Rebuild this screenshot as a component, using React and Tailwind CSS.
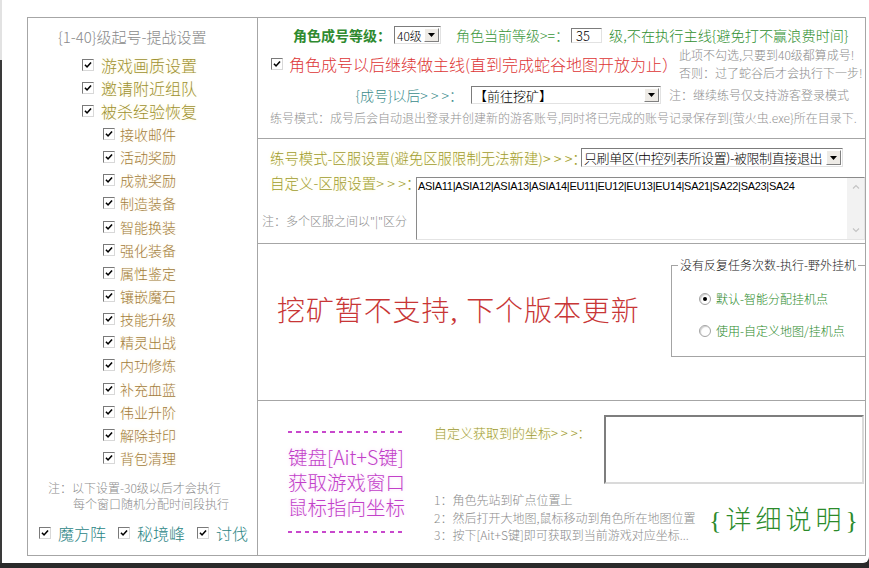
import clsx from "clsx";

const sans = "font-['Noto_Sans_CJK_SC',sans-serif]";
const serif = "font-['Liberation_Serif','Noto_Sans_CJK_SC',serif]";

const level1 = ["游戏画质设置", "邀请附近组队", "被杀经验恢复"];
const level2 = [
	"接收邮件",
	"活动奖励",
	"成就奖励",
	"制造装备",
	"智能换装",
	"强化装备",
	"属性鉴定",
	"镶嵌魔石",
	"技能升级",
	"精灵出战",
	"内功修炼",
	"补充血蓝",
	"伟业升阶",
	"解除封印",
	"背包清理",
];

const Check = ({ className }) => (
	<span
		className={clsx(
			"inline-flex h-[12px] w-[12px] shrink-0 items-center justify-center border border-t-[#7a7a7a] border-l-[#7a7a7a] border-r-[#d8d8d8] border-b-[#d8d8d8] bg-white",
			className
		)}
	>
		<svg viewBox="0 0 10 10" className="h-[8px] w-[8px]">
			<path d="M1.2 4.6 L3.8 7.4 L8.8 1.8" fill="none" stroke="#000" strokeWidth="2" />
		</svg>
	</span>
);

const Radio = ({ on }) => (
	<span className="flex h-[12px] w-[12px] shrink-0 items-center justify-center rounded-full border border-[#a4a4a4] bg-white shadow-[inset_1px_1px_1px_#cfcfcf]">
		{on && <span className="h-[4px] w-[4px] rounded-full bg-black" />}
	</span>
);

const Select = ({ value, className, textClass }) => (
	<div
		className={clsx(
			"flex items-stretch border border-t-[#7c7c7c] border-l-[#7c7c7c] border-b-[#e2e2e2] border-r-[#e2e2e2] bg-white",
			className
		)}
	>
		<span className={clsx("flex flex-1 items-center overflow-hidden whitespace-nowrap leading-[15px]", textClass)}>
			{value}
		</span>
		<span className="m-px flex w-[15px] shrink-0 items-center justify-center border border-t-white border-l-white border-b-[#808080] border-r-[#808080] bg-[#eeebe6]">
			<svg viewBox="0 0 7 4" className="h-[4px] w-[7px]">
				<path d="M0 0 H7 L3.5 4 Z" fill="#000" />
			</svg>
		</span>
	</div>
);

const Chevron = ({ up }) => (
	<svg viewBox="0 0 8 5" className="h-[5px] w-[8px]">
		<path
			d={up ? "M1 4.5 L4 1.5 L7 4.5" : "M1 0.5 L4 3.5 L7 0.5"}
			fill="none"
			stroke="#c4c4c4"
			strokeWidth="1.2"
		/>
	</svg>
);

const LeftPanel = () => (
	<div className="flex h-[539px] w-[231px] shrink-0 flex-col border border-[#a6a6a6]">
		<div className="pl-[30px] pt-[9px] text-[15px] leading-[20px] text-[#8a8a8a]">
			{"{1-40}级起号-提战设置"}
		</div>
		<div className="mt-[6px] flex flex-col">
			{level1.map((t) => (
				<div key={t} className="flex h-[23.15px] items-center pl-[54px]">
					<Check />
					<span className="ml-[7px] text-[16px] leading-[20px] text-[#9d912f] [text-shadow:0_0_4px_#fff4c4]">
						{t}
					</span>
				</div>
			))}
			{level2.map((t) => (
				<div key={t} className="flex h-[23.15px] items-center pl-[75px]">
					<Check />
					<span className="ml-[5px] text-[14px] leading-[20px] text-[#a27b3a] [text-shadow:0_0_4px_#fff1d0]">
						{t}
					</span>
				</div>
			))}
		</div>
		<div className="mt-[10px] text-[12px] leading-[16px] text-[#8c8c8c]">
			<div className="pl-[20px]">注：以下设置-30级以后才会执行</div>
			<div className="pl-[45px]">每个窗口随机分配时间段执行</div>
		</div>
		<div className="mt-[11px] flex h-[20px] items-center pl-[11px] text-[16px] leading-[20px] text-[#2b8585]">
			<Check />
			<span className="ml-[7px]">魔方阵</span>
			<Check className="ml-[12px]" />
			<span className="ml-[7px]">秘境峰</span>
			<Check className="ml-[12px]" />
			<span className="ml-[7px]">讨伐</span>
		</div>
	</div>
);

const SectionLevel = () => (
	<div className="flex h-[121px] flex-col border-b border-[#a6a6a6]">
		<div className="mt-[7px] flex h-[20px] items-center whitespace-nowrap">
			<span className="ml-[35px] text-[14px] font-bold leading-[20px] text-[#2f8a2f]">
				角色成号等级：
			</span>
			<Select value="40级" className="ml-[3px] h-[18px] w-[47px]" textClass="pl-[2px] text-[12px] text-black" />
			<span className="ml-[15px] text-[14px] leading-[20px] text-[#3a963a]">角色当前等级&gt;=：</span>
			<span className="ml-[2px] flex h-[15px] w-[31px] items-center border border-t-[#7c7c7c] border-l-[#7c7c7c] border-b-[#e2e2e2] border-r-[#e2e2e2] bg-white pl-[4px] text-[13px] leading-[13px] text-black">
				35
			</span>
			<span className="ml-[7px] text-[14.2px] leading-[20px] text-[#2f8f2f]">
				{"级,不在执行主线{避免打不赢浪费时间}"}
			</span>
		</div>
		<div className="mt-[2px] flex h-[34px] items-center whitespace-nowrap">
			<Check className="ml-[13px]" />
			<span className="ml-[6px] text-[16px] leading-[20px] text-[#dd3434]">
				角色成号以后继续做主线(直到完成蛇谷地图开放为止）
			</span>
			<div className="ml-auto flex w-[186px] flex-col text-[12px] leading-[18px] text-[#8c8c8c]">
				<span>此项不勾选,只要到40级都算成号!</span>
				<span>否则：过了蛇谷后才会执行下一步!</span>
			</div>
		</div>
		<div className="mt-[5px] flex h-[18px] items-center whitespace-nowrap">
			<div className="flex w-[213px] justify-end pr-[8px] text-[14px] leading-[20px] text-[#3b8b8b]">
				{"{成号}以后> > >："}
			</div>
			<Select value="【前往挖矿】" className="h-[18px] w-[190px]" textClass="pl-[2px] text-[13px] text-black" />
			<span className="ml-[8px] text-[12px] leading-[16px] text-[#8c8c8c]">注：继续练号仅支持游客登录模式</span>
		</div>
		<div className="mt-[6px] whitespace-nowrap pl-[12px] text-[12px] leading-[16px] text-[#939393]">
			{"练号模式：成号后会自动退出登录并创建新的游客账号,同时将已完成的账号记录保存到{萤火虫.exe}所在目录下."}
		</div>
	</div>
);

const SectionServer = () => (
	<div className="flex h-[105px] flex-col border-b border-[#a6a6a6]">
		<div className="mt-[9px] flex h-[19px] items-center whitespace-nowrap">
			<div className="w-[323px] pl-[12px] text-[14.4px] leading-[20px] text-[#a09c2c] [text-shadow:0_0_4px_#fff8c8]">
				{"练号模式-区服设置(避免区服限制无法新建)> > >："}
			</div>
			<Select
				value="只刷单区(中控列表所设置)-被限制直接退出"
				className="h-[19px] w-[262px]"
				textClass="pl-[2px] text-[13px] tracking-[-0.4px] text-black"
			/>
		</div>
		<div className="mt-[6px] flex">
			<div className="flex w-[158px] shrink-0 flex-col whitespace-nowrap">
				<div className="pl-[12px] text-[14.5px] leading-[20px] text-[#a09c2c] [text-shadow:0_0_4px_#fff8c8]">
					{"自定义-区服设置> > >："}
				</div>
				<div className="mt-[20px] pl-[4px] text-[12px] leading-[16px] text-[#8c8c8c]">
					注：多个区服之间以"|"区分
				</div>
			</div>
			<div className="mt-[4px] flex h-[63px] w-[449px] border border-t-[#8a8a8a] border-l-[#8a8a8a] border-b-[#e4e4e4] border-r-[#e4e4e4] bg-white">
				<div className="flex-1 whitespace-nowrap pl-[1px] pt-[1px] font-['Liberation_Sans',sans-serif] text-[11px] leading-[14px] tracking-[-0.3px] text-black">
					ASIA11|ASIA12|ASIA13|ASIA14|EU11|EU12|EU13|EU14|SA21|SA22|SA23|SA24
				</div>
				<div className="flex w-[17px] flex-col items-center justify-between bg-[#f2f2f2] py-[6px]">
					<Chevron up />
					<Chevron />
				</div>
			</div>
		</div>
	</div>
);

const SectionMine = () => (
	<div className="flex h-[157px] border-b border-[#a6a6a6]">
		<div className="flex-1">
			<div
				className={clsx(
					serif,
					"whitespace-nowrap pl-[19px] pt-[50px] text-[28px] font-extralight leading-[36px] tracking-[0.9px] text-[#c83636]"
				)}
			>
				挖矿暂不支持, 下个版本更新
			</div>
		</div>
		<div className="relative mt-[21px] h-[92px] w-[194px] shrink-0 border-t border-l border-b border-[#a4a4a4]">
			<span className="absolute -top-[9px] left-[6px] whitespace-nowrap bg-white px-[2px] text-[12px] leading-[16px] text-[#222]">
				没有反复任务次数-执行-野外挂机
			</span>
			<div className="flex flex-col pl-[27px] pt-[23px] text-[12px] leading-[20px] text-[#2a8a2a]">
				<div className="flex h-[20px] items-center">
					<Radio on />
					<span className="ml-[5px] whitespace-nowrap">默认-智能分配挂机点</span>
				</div>
				<div className="mt-[12px] flex h-[20px] items-center">
					<Radio />
					<span className="ml-[5px] whitespace-nowrap">使用-自定义地图/挂机点</span>
				</div>
			</div>
		</div>
	</div>
);

const Dashes = () => (
	<div className="flex h-[25px] items-center">
		<div className="h-[2px] w-[119px] bg-[repeating-linear-gradient(90deg,#c848cc_0_4px,transparent_4px_8.5px)]" />
	</div>
);

const SectionCoord = () => (
	<div className="flex h-[154px]">
		<div className="w-[176px] shrink-0 pl-[30px] pt-[18px]">
			<Dashes />
			<div className="flex flex-col whitespace-nowrap text-[19.5px] leading-[25px] text-[#c23fc9] [text-shadow:0_0_4px_#f8d6f8]">
				<span className="h-[25px]">键盘[Ait+S键]</span>
				<span className="h-[25px]">获取游戏窗口</span>
				<span className="h-[25px]">鼠标指向坐标</span>
			</div>
			<Dashes />
		</div>
		<div className="flex flex-1 flex-col">
			<div className="flex">
				<div className="mt-[22px] whitespace-nowrap text-[13px] leading-[20px] text-[#9c9a30] [text-shadow:0_0_4px_#fff8c8]">
					{"自定义获取到的坐标> > >："}
				</div>
				<div className="ml-auto mr-[1px] mt-[14px] h-[69px] w-[260px] border-2 border-t-[#7e7e7e] border-l-[#7e7e7e] border-b-[#dadada] border-r-[#dadada] bg-white" />
			</div>
			<div className="mt-[7px] flex">
				<div className="whitespace-nowrap text-[12px] leading-[17.5px] text-[#8c8c8c]">
					<div>1：角色先站到矿点位置上</div>
					<div>2：然后打开大地图,鼠标移动到角色所在地图位置</div>
					<div>3：按下[Ait+S键]即可获取到当前游戏对应坐标...</div>
				</div>
				<div
					className={clsx(
						serif,
						"ml-auto mr-[3px] mt-[15px] whitespace-nowrap text-[26px] font-extralight leading-[30px] tracking-[4px] text-[#2b8b2b]"
					)}
				>
					{"{详细说明}"}
				</div>
			</div>
		</div>
	</div>
);

export default function App() {
	return (
		<div className={clsx(sans, "flex h-[568px] w-[869px] flex-col overflow-hidden bg-[#2a2a2a] font-light")}>
			<div className="flex h-[563px]">
				<div className="flex w-[2px] flex-col">
					<div className="h-[60px] bg-[#e2e2e2]" />
					<div className="flex-1 bg-[#3a3a3a]" />
				</div>
				<div className="flex flex-1 rounded-br-[6px] bg-white pl-[25px] pt-[17px]">
					<LeftPanel />
					<div className="flex h-[539px] w-[608px] shrink-0 flex-col border-t border-r border-b border-[#a6a6a6]">
						<SectionLevel />
						<SectionServer />
						<SectionMine />
						<SectionCoord />
					</div>
				</div>
			</div>
		</div>
	);
}
